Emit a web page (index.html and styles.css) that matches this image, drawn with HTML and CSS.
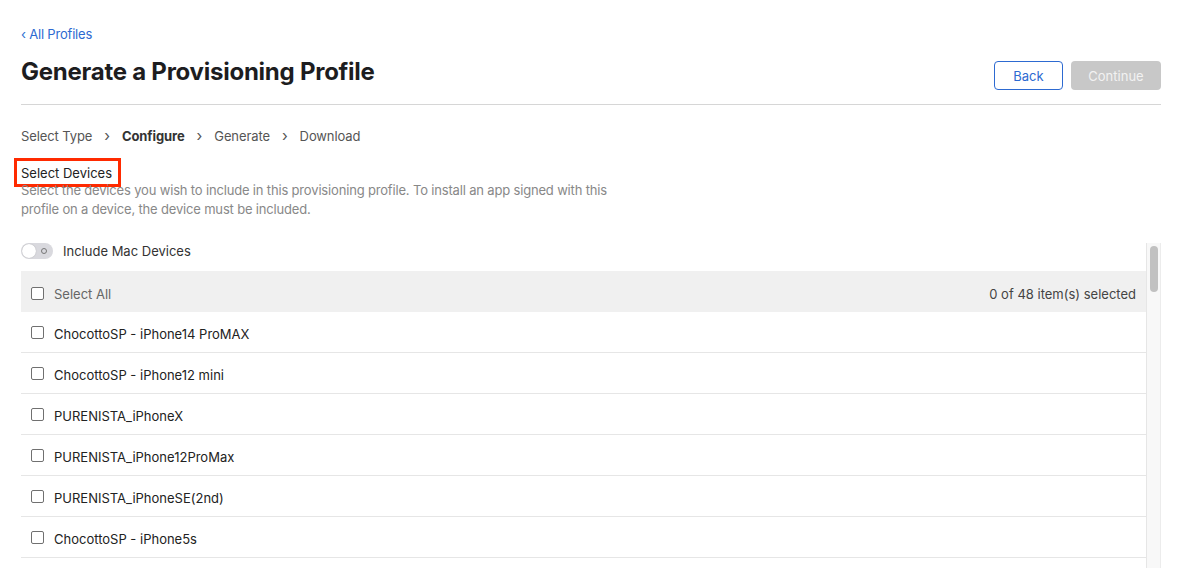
FILE: index.html
```html
<!DOCTYPE html>
<html lang="en">
<head>
<meta charset="utf-8">
<title>Generate a Provisioning Profile</title>
<link rel="stylesheet" href="styles.css">
</head>
<body>
<div class="page">
  <a class="back-link" href="#">&#8249; All Profiles</a>
  <div class="header">
    <h1 class="title">Generate a Provisioning Profile</h1>
    <div class="actions">
      <button class="btn btn-back">Back</button>
      <button class="btn btn-continue" disabled>Continue</button>
    </div>
  </div>
  <nav class="steps">
    <span class="step">Select Type</span>
    <span class="chev">&#8250;</span>
    <span class="step current">Configure</span>
    <span class="chev">&#8250;</span>
    <span class="step">Generate</span>
    <span class="chev">&#8250;</span>
    <span class="step">Download</span>
  </nav>
  <div class="section">
    <div class="section-label">Select Devices</div>
    <p class="desc">Select the devices you wish to include in this provisioning profile. To install an app signed with this<br>profile on a device, the device must be included.</p>
  </div>
  <div class="scroller">
    <div class="list">
      <div class="toggle-row">
        <span class="toggle"><span class="knob"></span><span class="off-mark"></span></span>
        <span class="toggle-label">Include Mac Devices</span>
      </div>
      <div class="thead">
        <label class="cell"><span class="cb"></span><span class="head-text">Select All</span></label>
        <span class="count">0 of 48 item(s) selected</span>
      </div>
      <div class="row"><span class="cb"></span><span class="name">ChocottoSP - iPhone14 ProMAX</span></div>
      <div class="row"><span class="cb"></span><span class="name">ChocottoSP - iPhone12 mini</span></div>
      <div class="row"><span class="cb"></span><span class="name">PURENISTA_iPhoneX</span></div>
      <div class="row"><span class="cb"></span><span class="name">PURENISTA_iPhone12ProMax</span></div>
      <div class="row"><span class="cb"></span><span class="name">PURENISTA_iPhoneSE(2nd)</span></div>
      <div class="row"><span class="cb"></span><span class="name">ChocottoSP - iPhone5s</span></div>
      <div class="row"><span class="cb"></span><span class="name">&nbsp;</span></div>
    </div>
    <div class="scrollbar"><div class="thumb"></div></div>
  </div>
</div>
</body>
</html>
```
FILE: styles.css
```css
* { box-sizing: border-box; }
html, body { margin: 0; padding: 0; background: #fff; }
body {
  font-family: "Inter", "Liberation Sans", Arial, sans-serif;
  color: #333;
  font-size: 13px;
  -webkit-font-smoothing: antialiased;
}
.page {
  padding: 25px 32px 0 21px;
  width: 1193px;
  height: 581px;
  overflow: hidden;
}
.back-link {
  display: block;
  color: #2d6ad1;
  text-decoration: none;
  font-size: 13px;
  line-height: 16px;
  margin-top: 1px;
  letter-spacing: -0.2px;
}
.header {
  display: flex;
  justify-content: space-between;
  align-items: flex-start;
  margin-top: 11px;
  height: 52px;
  border-bottom: 1px solid #d6d6d6;
}
.title {
  margin: 0;
  margin-top: 4px;
  font-size: 24px;
  line-height: 30px;
  font-weight: 700;
  color: #1d1d1f;
  letter-spacing: -0.25px;
}
.actions {
  display: flex;
  gap: 8px;
  margin-top: 8px;
}
.btn {
  font-family: inherit;
  font-size: 13px;
  height: 29px;
  border-radius: 4px;
  padding: 0;
}
.btn-back {
  width: 69px;
  background: #fff;
  color: #2d6ad1;
  border: 1px solid #2d6ad1;
}
.btn-continue {
  width: 90px;
  background: #c8c8c8;
  color: #f2f2f2;
  border: none;
}
.steps {
  display: flex;
  align-items: center;
  gap: 12px;
  margin-top: 23px;
  line-height: 16px;
  color: #555;
  letter-spacing: -0.1px;
}
.step.current { font-weight: 700; color: #333; }
.chev { font-size: 15px; color: #555; }
.section { margin-top: 14px; }
.section-label {
  display: inline-block;
  margin-left: -7px;
  border: 3px solid #ff2a00;
  padding: 4px 6px 3px 4px;
  line-height: 16px;
  color: #222;
}
.desc {
  margin: -6px 0 0 0;
  color: #888;
  line-height: 19px;
  letter-spacing: -0.17px;
}
.scroller {
  display: flex;
  margin-top: 24px;
  height: 325px;
}
.list {
  flex: 1;
  overflow: hidden;
}
.toggle-row {
  display: flex;
  align-items: center;
  height: 16px;
  margin-bottom: 12px;
  gap: 10px;
}
.toggle {
  position: relative;
  width: 32px;
  height: 16px;
  border-radius: 8px;
  background: #d9d9de;
}
.knob {
  position: absolute;
  left: 1px;
  top: 1px;
  width: 14px;
  height: 14px;
  border-radius: 50%;
  background: #fff;
  box-shadow: 0 0 1px rgba(0,0,0,0.3);
}
.off-mark {
  position: absolute;
  right: 6px;
  top: 5px;
  width: 6px;
  height: 6px;
  border-radius: 50%;
  border: 1px solid #777;
}
.toggle-label { color: #333; margin-top: -1px; }
.thead {
  display: flex;
  align-items: center;
  justify-content: space-between;
  height: 41px;
  background: #f0f0f0;
  padding: 5px 10px 0 10px;
}
.cell { display: flex; align-items: center; }
.cb {
  display: inline-block;
  width: 13px;
  height: 13px;
  border: 1px solid #707070;
  border-radius: 2px;
  background: #fff;
  margin-right: 10px;
  flex: none;
}
.thead .cb { margin-top: -2px; }
.head-text { color: #666; }
.count { color: #444; }
.row {
  display: flex;
  align-items: center;
  height: 41px;
  padding: 3px 0 0 10px;
  border-bottom: 1px solid #e6e6e6;
  color: #222;
}
.row .cb { margin-top: -3px; }
.scrollbar {
  width: 15px;
  flex: none;
  background: #f8f8f8;
  border-left: 1px solid #e6e6e6;
  border-right: 1px solid #ececec;
  padding: 3px 2px 0 3px;
}
.thumb {
  width: 8px;
  height: 46px;
  border-radius: 4px;
  background: #c1c1c1;
}
```
